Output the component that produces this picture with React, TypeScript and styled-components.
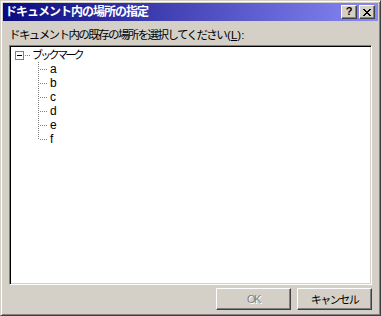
import React from 'react';
import styled, { createGlobalStyle } from 'styled-components';

const items = ['a', 'b', 'c', 'd', 'e', 'f'];

const App: React.FC = () => {
  return (
    <>
      <GlobalStyle />
      <Window>
        <TitleBar>
          <Title>ドキュメント内の場所の指定</Title>
          <CaptionButtons>
            <CaptionButton>
              <HelpGlyph>?</HelpGlyph>
            </CaptionButton>
            <CaptionButton>
              <svg width="8" height="7" viewBox="0 0 8 7">
                <path d="M0 0h2v1h1v1h2V1h1V0h2v1H7v1H6v1H5v1h1v1h1v1h1v1H6V6H5V5H3v1H2v1H0V6h1V5h1V4h1V3H2V2H1V1H0z" fill="#000" />
              </svg>
            </CaptionButton>
          </CaptionButtons>
        </TitleBar>
        <Body>
          <FieldLabel>
            ドキュメント内の既存の場所を選択してください
            <Mnemonic>
              (<u>L</u>):
            </Mnemonic>
          </FieldLabel>
          <ListBox>
            <RootRow>
              <Expander>
                <Minus />
              </Expander>
              <HConnector $width={6} />
              <RootText>ブックマーク</RootText>
            </RootRow>
            <Children>
              {items.map((item, i) => (
                <ChildRow key={item}>
                  <Branch $last={i === items.length - 1} />
                  <ItemText>{item}</ItemText>
                </ChildRow>
              ))}
            </Children>
          </ListBox>
          <ButtonRow>
            <PushButton disabled>OK</PushButton>
            <PushButton>キャンセル</PushButton>
          </ButtonRow>
        </Body>
      </Window>
    </>
  );
};

const GlobalStyle = createGlobalStyle`
  html, body {
    margin: 0;
    padding: 0;
    background: #d4d0c8;
  }
  * {
    box-sizing: border-box;
  }
`;

const uiFont = `"Liberation Sans", "Noto Sans CJK JP", sans-serif`;

const Window = styled.div`
  width: 381px;
  height: 316px;
  display: flex;
  flex-direction: column;
  background: #d4d0c8;
  border: 1px solid;
  border-color: #d4d0c8 #404040 #404040 #d4d0c8;
  box-shadow: inset 1px 1px 0 #fff, inset -1px -1px 0 #808080;
  padding: 2px;
  font-family: ${uiFont};
  font-size: 11px;
  color: #000;
`;

const TitleBar = styled.div`
  height: 18px;
  display: flex;
  align-items: center;
  justify-content: space-between;
  padding: 0 3px 0 2px;
  background: linear-gradient(to right, #0a0a80, #8888f6);
`;

const Title = styled.div`
  color: #fff;
  font-weight: bold;
  font-size: 12px;
  letter-spacing: -1px;
  line-height: 14px;
  white-space: nowrap;
`;

const CaptionButtons = styled.div`
  display: flex;
  gap: 2px;
`;

const CaptionButton = styled.div`
  width: 16px;
  height: 14px;
  display: flex;
  align-items: center;
  justify-content: center;
  background: #d4d0c8;
  border: 1px solid;
  border-color: #fff #404040 #404040 #fff;
  box-shadow: inset -1px -1px 0 #808080;
`;

const HelpGlyph = styled.span`
  font-family: "Liberation Sans", sans-serif;
  font-weight: bold;
  font-size: 11px;
  line-height: 11px;
  margin-top: -1px;
`;

const Body = styled.div`
  flex: 1;
  display: flex;
  flex-direction: column;
  padding: 7px 6px 0 6px;
`;

const FieldLabel = styled.div`
  font-size: 11.5px;
  line-height: 14px;
  letter-spacing: -1.6px;
  white-space: nowrap;
  margin-bottom: 3px;
`;

const Mnemonic = styled.span`
  letter-spacing: 0;
  margin-left: 1px;

  u {
    text-decoration: underline;
  }
`;

const ListBox = styled.div`
  height: 240px;
  background: #fff;
  border: 1px solid;
  border-color: #808080 #fff #fff #808080;
  box-shadow: inset 1px 1px 0 #000, inset -1px -1px 0 #d4d0c8;
  padding: 2px 0 0 5px;
`;

const RootRow = styled.div`
  height: 14px;
  display: flex;
  align-items: center;
`;

const Expander = styled.div`
  width: 9px;
  height: 9px;
  border: 1px solid #808080;
  background: #fff;
  display: flex;
  align-items: center;
  justify-content: center;
`;

const Minus = styled.div`
  width: 5px;
  height: 1px;
  background: #000;
`;

const HConnector = styled.div<{ $width: number }>`
  width: ${(p) => p.$width}px;
  height: 1px;
  margin-left: 1px;
  background: repeating-linear-gradient(to right, #808080 0 1px, transparent 1px 2px);
`;

const RootText = styled.span`
  font-size: 11px;
  letter-spacing: -2.7px;
  margin-left: 1px;
  line-height: 14px;
  white-space: nowrap;
`;

const Children = styled.div`
  padding-left: 23px;
`;

const ChildRow = styled.div`
  height: 14px;
  display: flex;
  align-items: center;
`;

const Branch = styled.div<{ $last: boolean }>`
  position: relative;
  width: 11px;
  height: 14px;

  &::before {
    content: '';
    position: absolute;
    left: 0;
    top: 0;
    width: 1px;
    height: ${(p) => (p.$last ? '8px' : '14px')};
    background: repeating-linear-gradient(to bottom, #808080 0 1px, transparent 1px 2px);
  }

  &::after {
    content: '';
    position: absolute;
    left: 1px;
    top: 7px;
    width: 9px;
    height: 1px;
    background: repeating-linear-gradient(to right, transparent 0 1px, #808080 1px 2px);
  }
`;

const ItemText = styled.span`
  font-size: 12px;
  line-height: 14px;
  margin-left: 1px;
`;

const ButtonRow = styled.div`
  display: flex;
  justify-content: flex-end;
  gap: 6px;
  margin-top: 3px;
`;

const PushButton = styled.button`
  width: 75px;
  height: 22px;
  padding: 0;
  font-family: ${uiFont};
  font-size: 11px;
  letter-spacing: -1.5px;
  color: #000;
  background: #d4d0c8;
  border: 1px solid;
  border-color: #fff #404040 #404040 #fff;
  box-shadow: inset -1px -1px 0 #808080;

  &:disabled {
    color: #808080;
    text-shadow: 1px 1px 0 #fff;
  }
`;

export default App;
